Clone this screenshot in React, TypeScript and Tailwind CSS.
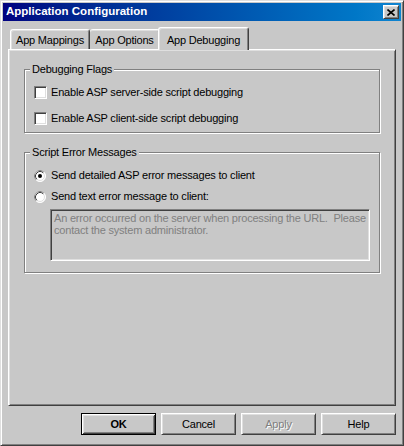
import React from "react";

const raised =
  "border border-t-white border-l-white border-r-[#404040] border-b-[#404040] shadow-[inset_1px_1px_0_#dfdfdf,inset_-1px_-1px_0_#808080]";

function Checkbox() {
  return (
    <div className="w-[13px] h-[13px] shrink-0 bg-white border border-t-[#808080] border-l-[#808080] border-r-white border-b-white shadow-[inset_1px_1px_0_#404040,inset_-1px_-1px_0_#dfdfdf]" />
  );
}

function Radio({ checked }: { checked?: boolean }) {
  return (
    <svg width="12" height="12" viewBox="0 0 12 12" className="shrink-0">
      <circle cx="6" cy="6" r="5.5" fill="white" stroke="#ffffff" />
      <path d="M2.11 9.89 A5.5 5.5 0 0 1 9.89 2.11" fill="none" stroke="#808080" />
      <circle cx="6" cy="6" r="4.5" fill="white" stroke="#dfdfdf" />
      <path d="M2.82 9.18 A4.5 4.5 0 0 1 9.18 2.82" fill="none" stroke="#404040" />
      {checked && <circle cx="6" cy="6" r="2" fill="#000" />}
    </svg>
  );
}

function Group({
  label,
  className,
  children,
}: {
  label: string;
  className: string;
  children: React.ReactNode;
}) {
  return (
    <div
      className={
        "relative w-[356px] border border-[#808080] shadow-[inset_1px_1px_0_#fff,1px_1px_0_#fff] " +
        className
      }
    >
      <span className="absolute -top-[7px] left-[5px] px-[2px] bg-[#c8c8c8] leading-[13px] text-black">
        {label}
      </span>
      {children}
    </div>
  );
}

export default function App() {
  return (
    <div className="w-[404px] h-[446px] bg-[#c8c8c8] border border-t-[#dfdfdf] border-l-[#dfdfdf] border-r-[#404040] border-b-[#404040] shadow-[inset_1px_1px_0_#fff,inset_-1px_-1px_0_#808080] p-[2px] flex flex-col font-['Liberation_Sans',Arial,sans-serif] text-[11px] tracking-[-0.2px] text-black select-none">
      {/* Title bar */}
      <div className="h-[18px] flex items-center justify-between bg-linear-to-r from-[#000080] to-[#1084d0] pl-[3px] pr-[2px]">
        <span className="text-white font-bold text-[11.5px] tracking-normal leading-none">
          Application Configuration
        </span>
        <div className={"w-[16px] h-[14px] bg-[#c8c8c8] flex items-center justify-center " + raised}>
          <svg width="8" height="7" viewBox="0 0 8 7">
            <path d="M0.5 0.5 L7.5 6.5 M7.5 0.5 L0.5 6.5" stroke="#000" strokeWidth="1.6" />
          </svg>
        </div>
      </div>

      {/* Tabs + panel */}
      <div className="mt-[6px] px-[5px] flex flex-col">
        <div className="relative z-10 -mb-[1px] h-[23px] pl-[2px] flex items-start">
          <div className="mt-[2px] w-[80px] h-[20px] rounded-t-[3px] border-t border-l border-t-white border-l-white border-r border-r-[#404040] shadow-[inset_1px_1px_0_#dfdfdf,inset_-1px_0_0_#808080] flex items-center justify-center pt-[1px]">
            App Mappings
          </div>
          <div className="mt-[2px] w-[70px] h-[20px] rounded-t-[3px] border-t border-t-white border-r border-r-[#404040] shadow-[inset_0_1px_0_#dfdfdf,inset_-1px_0_0_#808080] flex items-center justify-center pt-[1px]">
            App Options
          </div>
          <div className="-ml-[2px] w-[91px] h-[23px] bg-[#c8c8c8] rounded-t-[3px] border-t border-l border-t-white border-l-white border-r border-r-[#404040] shadow-[inset_1px_1px_0_#dfdfdf,inset_-1px_0_0_#808080] flex items-start justify-center pt-[4px]">
            App Debugging
          </div>
        </div>
        <div className="h-[357px] border border-t-white border-l-white border-r-[#404040] border-b-[#404040] shadow-[inset_1px_1px_0_#dfdfdf,inset_-1px_-1px_0_#808080] pt-[19px] pl-[15px] flex flex-col">
          <Group label="Debugging Flags" className="h-[64px] pt-[16px] pl-[9px] flex flex-col gap-[13px]">
            <div className="h-[13px] flex items-center gap-[4px]">
              <Checkbox />
              <span>Enable ASP server-side script debugging</span>
            </div>
            <div className="h-[13px] flex items-center gap-[4px]">
              <Checkbox />
              <span>Enable ASP client-side script debugging</span>
            </div>
          </Group>
          <Group label="Script Error Messages" className="mt-[19px] h-[121px] pt-[16px] pl-[9px] flex flex-col">
            <div className="h-[13px] flex items-center gap-[5px]">
              <Radio checked />
              <span>Send detailed ASP error messages to client</span>
            </div>
            <div className="mt-[8px] h-[13px] flex items-center gap-[5px]">
              <Radio />
              <span>Send text error message to client:</span>
            </div>
            <div className="mt-[6px] ml-[16px] w-[320px] h-[52px] border border-t-[#808080] border-l-[#808080] border-r-white border-b-white shadow-[inset_1px_1px_0_#404040,inset_-1px_-1px_0_#dfdfdf] px-[3px] pt-[2px] text-[#808080] leading-[12px] whitespace-pre-wrap">
              {"An error occurred on the server when processing the URL.  Please contact the system administrator."}
            </div>
          </Group>
        </div>
      </div>

      {/* Buttons */}
      <div className="mt-[7px] pr-[5px] flex justify-end gap-[5px]">
        <button className="w-[75px] h-[22px] bg-[#c8c8c8] border border-black shadow-[inset_1px_1px_0_#fff,inset_-1px_-1px_0_#404040,inset_2px_2px_0_#dfdfdf,inset_-2px_-2px_0_#808080] font-bold flex items-center justify-center">
          OK
        </button>
        <button className={"w-[75px] h-[22px] bg-[#c8c8c8] flex items-center justify-center " + raised}>
          Cancel
        </button>
        <button className={"w-[75px] h-[22px] bg-[#c8c8c8] flex items-center justify-center text-[#808080] [text-shadow:1px_1px_0_#fff] " + raised}>
          Apply
        </button>
        <button className={"w-[75px] h-[22px] bg-[#c8c8c8] flex items-center justify-center " + raised}>
          Help
        </button>
      </div>
    </div>
  );
}
